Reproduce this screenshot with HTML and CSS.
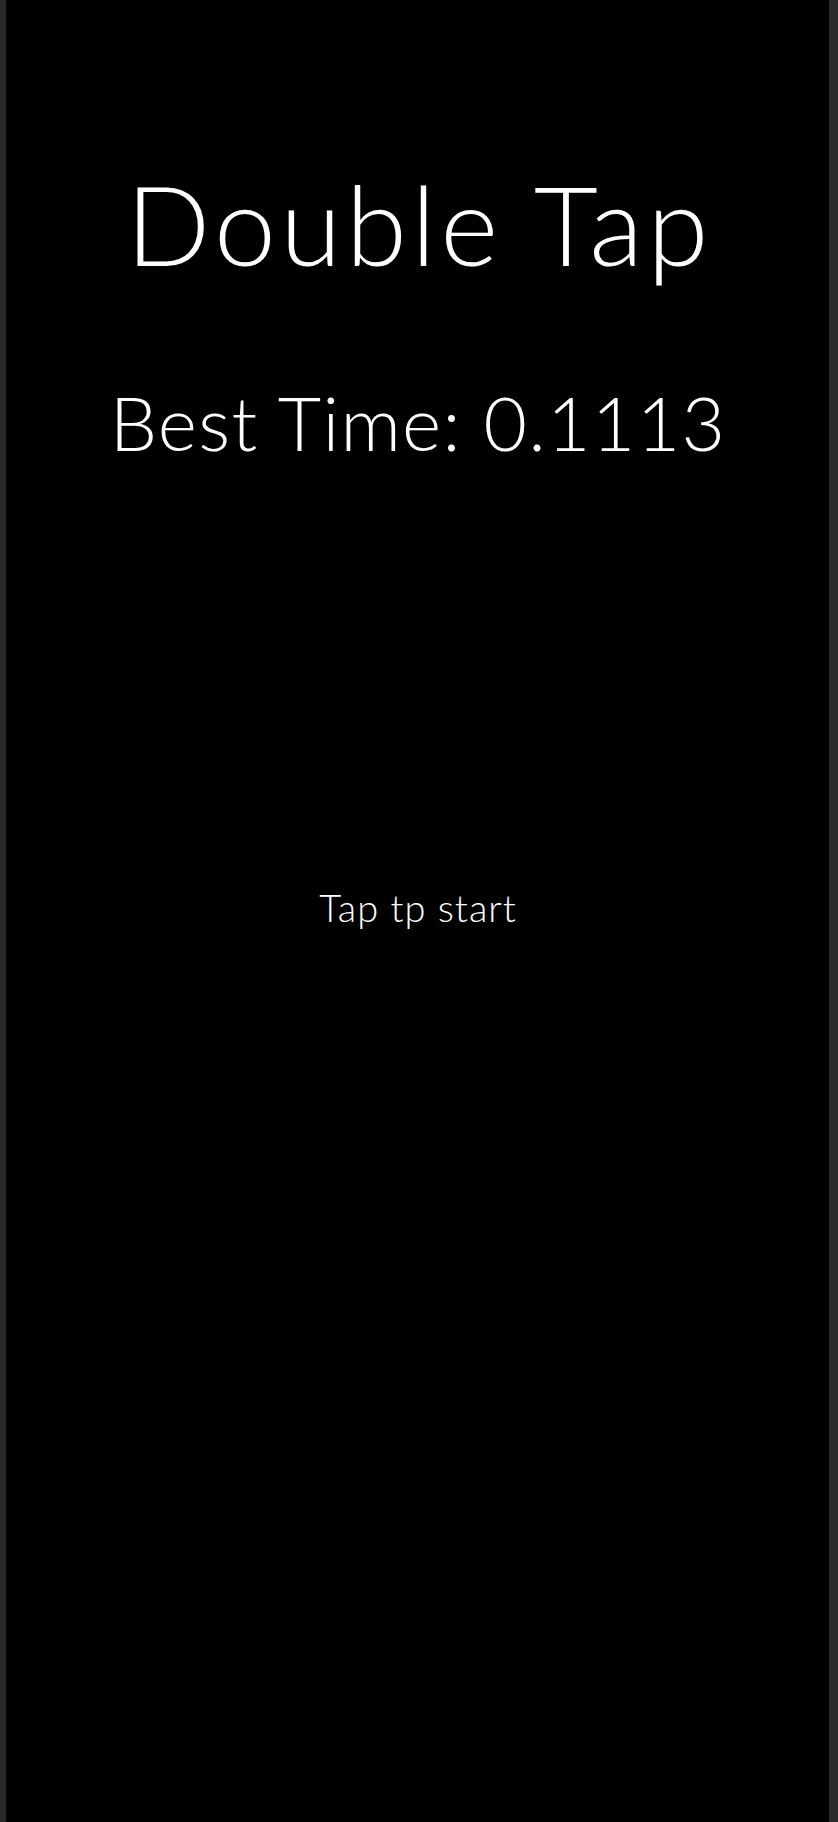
FILE: index.html
```html
<!DOCTYPE html>
<html lang="en">
<head>
<meta charset="utf-8">
<title>Double Tap</title>
<link rel="stylesheet" href="styles.css">
</head>
<body>
<main class="screen">
  <h1 class="title">Double Tap</h1>
  <p class="best">Best Time: 0.1113</p>
  <p class="hint">Tap tp start</p>
</main>
</body>
</html>
```
FILE: styles.css
```css
html, body {
  margin: 0;
  padding: 0;
  height: 100%;
}
body {
  background: #2a2a2a;
  font-family: "Lato", "Noto Sans", sans-serif;
  font-weight: 300;
  color: #ffffff;
}
.screen {
  margin: 0 9px 0 6px;
  height: 1822px;
  background: #000000;
  display: flex;
  flex-direction: column;
  align-items: center;
  padding-top: 157px;
  box-sizing: border-box;
}
.title {
  margin: 0 0 0 4px;
  font-size: 111px;
  line-height: 1.2;
  font-weight: 300;
  letter-spacing: 4.4px;
}
.best {
  margin: 87px 0 0 1px;
  font-size: 75px;
  line-height: 1.2;
  letter-spacing: 1.3px;
}
.hint {
  margin: 418px 0 0 1px;
  font-size: 38px;
  line-height: 1.2;
  letter-spacing: 1px;
}
```
